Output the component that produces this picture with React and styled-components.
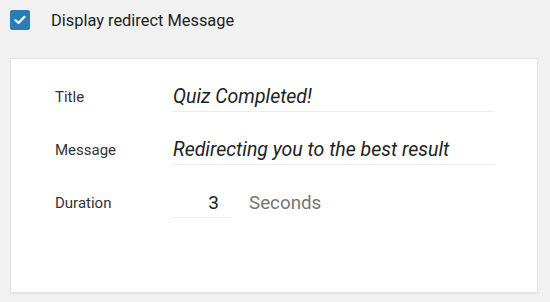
import React, { useState } from 'react';
import styled, { createGlobalStyle } from 'styled-components';

const GlobalStyle = createGlobalStyle`
    body {
        margin: 0;
        background: #f1f1f1;
        font-family: Roboto, "Liberation Sans", sans-serif;
    }
`;

const Page = styled.div`
    padding: 10px 12px 9px 10px;
`;

const Toggle = styled.label`
    display: flex;
    align-items: center;
    gap: 21px;
    height: 20px;
    font-size: 16.4px;
    color: #222;
    cursor: pointer;
`;

const Box = styled.span`
    display: flex;
    align-items: center;
    justify-content: center;
    width: 20px;
    height: 20px;
    border-radius: 2px;
    background: ${p => (p.checked ? '#2b7db8' : '#fff')};
    border: ${p => (p.checked ? 'none' : '1px solid #999')};
    box-sizing: border-box;
`;

const Card = styled.div`
    margin-top: 28px;
    height: 235px;
    box-sizing: border-box;
    background: #fff;
    border: 1px solid #e2e2e2;
    box-shadow: 0 1px 1px rgba(0, 0, 0, 0.05);
    padding: 22px 0 0 44px;
    display: flex;
    flex-direction: column;
    gap: 22px;
`;

const Row = styled.div`
    display: grid;
    grid-template-columns: 117px 323px;
    align-items: center;
    height: 31px;
`;

const Label = styled.span`
    font-size: 15px;
    color: #333;
`;

const TextInput = styled.input`
    height: 31px;
    box-sizing: border-box;
    border: none;
    border-bottom: 1px solid #ededed;
    padding: 0 1px;
    font-family: inherit;
    font-size: 19.5px;
    font-style: italic;
    color: #222;
    outline: none;
    background: transparent;
`;

const DurationField = styled.div`
    display: flex;
    align-items: center;
    gap: 17px;
`;

const NumberInput = styled(TextInput)`
    width: 60px;
    font-size: 19px;
    font-style: normal;
    text-align: right;
    padding-right: 13px;
`;

const Unit = styled.span`
    font-size: 18.8px;
    color: #767676;
`;

export default function App() {
    const [checked, setChecked] = useState(true);
    const [title, setTitle] = useState('Quiz Completed!');
    const [message, setMessage] = useState('Redirecting you to the best result');
    const [duration, setDuration] = useState('3');

    return <>
        <GlobalStyle />
        <Page>
            <Toggle onClick={() => setChecked(!checked)}>
                <Box checked={checked}>
                    {checked && <svg width="12" height="10" viewBox="0 0 12 10">
                        <path d="M1.5 5.2 L4.5 8 L10.5 1.8" fill="none" stroke="#fff" strokeWidth="2.2" strokeLinecap="round" strokeLinejoin="round" />
                    </svg>}
                </Box>
                Display redirect Message
            </Toggle>
            {checked && <Card>
                <Row>
                    <Label>Title</Label>
                    <TextInput value={title} onChange={e => setTitle(e.target.value)} />
                </Row>
                <Row>
                    <Label>Message</Label>
                    <TextInput value={message} onChange={e => setMessage(e.target.value)} />
                </Row>
                <Row>
                    <Label>Duration</Label>
                    <DurationField>
                        <NumberInput value={duration} onChange={e => setDuration(e.target.value)} />
                        <Unit>Seconds</Unit>
                    </DurationField>
                </Row>
            </Card>}
        </Page>
    </>;
}
